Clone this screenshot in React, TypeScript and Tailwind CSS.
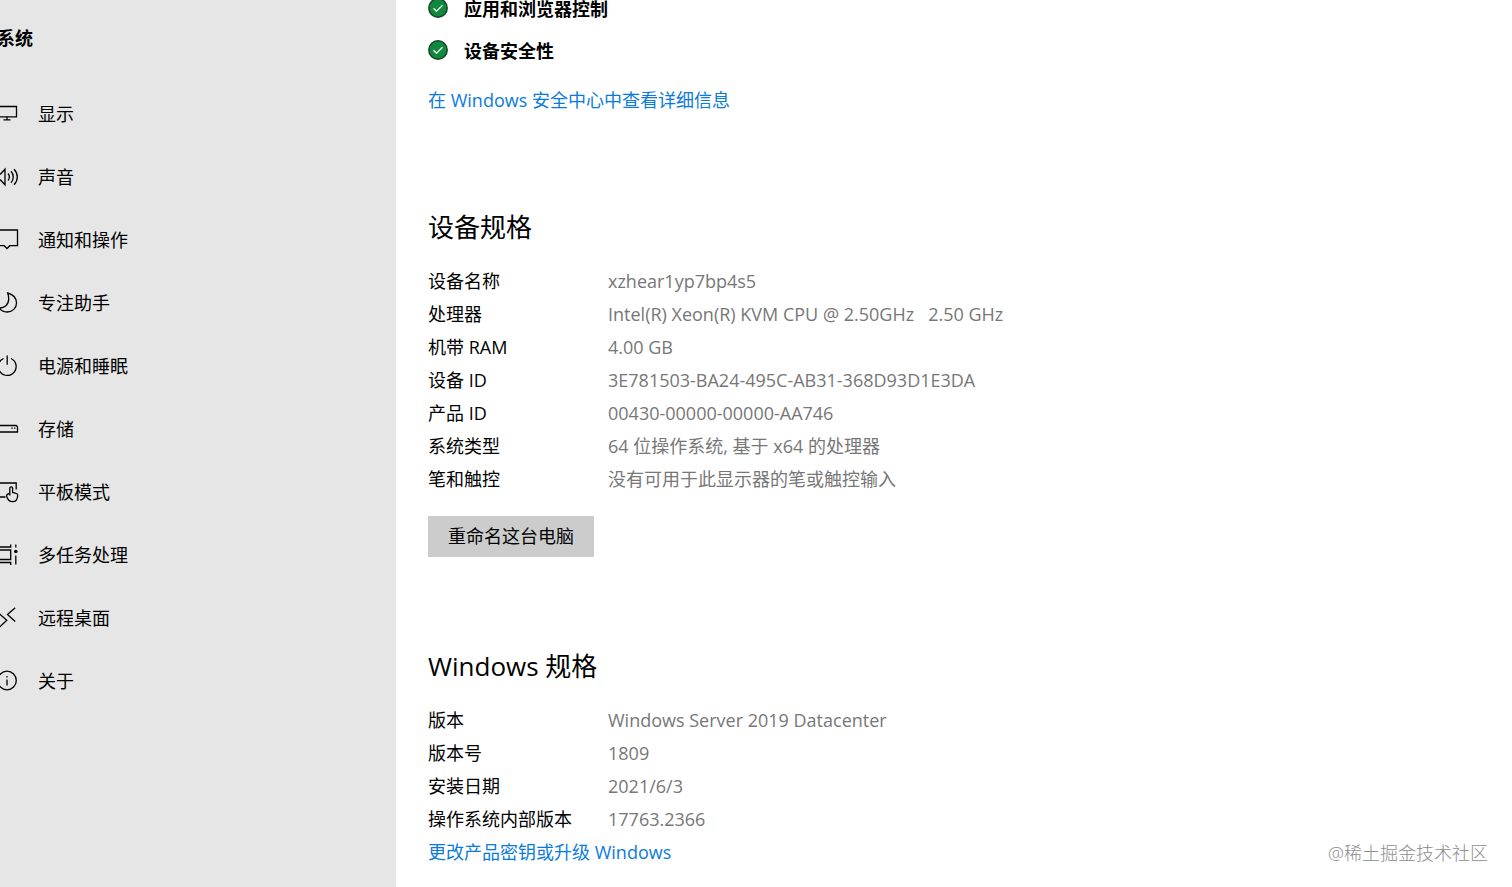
import type { ReactNode } from 'react'

type Spec = { label: string; value: string }

const navItems: { label: string; icon: ReactNode }[] = [
  {
    label: '显示',
    icon: (
      <>
        <path d="M.7 3.5h18.8v10.3H.7z" />
        <path d="M10 14v2.8M6.500 16.800h7" />
      </>
    ),
  },
  {
    label: '声音',
    icon: (
      <>
        <path d="M8 3.2v15.6L3.5 14H.7V8h2.8z" />
        <path d="M11 7.5c1.6 2 1.6 5 0 7M14 5.3c3 3.2 3 8.2 0 11.4M17 3.2c4.4 4.4 4.4 11.2 0 15.6" />
      </>
    ),
  },
  {
    label: '通知和操作',
    icon: <path d="M.7 1h19.8v15.7h-7.7L10 19.5l-2.800-2.800H.7z" />,
  },
  {
    label: '专注助手',
    icon: <path d="M10.7 1c5 1.4 8.8 5 8.8 9.9 0 5.200-4 9.100-9.300 9.100-3.600 0-6.300-1.300-8.200-4 5.500.3 9.700-3.500 9.700-9 0-2.200-.3-4-1-6z" />,
  },
  {
    label: '电源和睡眠',
    icon: (
      <>
        <path d="M6.500 3.500a8.900 8.900 0 1 0 7.500 0" />
        <path d="M10.200.5v9.200" />
      </>
    ),
  },
  {
    label: '存储',
    icon: (
      <>
        <path d="M.7 7.500h18.500l1.300 1.300v5.200H.7z" />
        <path d="M14.300 10.200h1.400M17 10.200h1.400" />
      </>
    ),
  },
  {
    label: '平板模式',
    icon: (
      <>
        <path d="M8.500 16H.7V2h18.500v6.500" />
        <path d="M12.800 14.500V7.300c0-2 2.800-2 2.800 0v4.200l3.600.8c1.300.3 1.600 1 1.500 2.200-.2 3.600-1.500 6.200-5 6.200-3.200 0-5.200-2.300-6-5.200-.3-1.300.5-2.300 1.500-2.600l1.600-.5" />
      </>
    ),
  },
  {
    label: '多任务处理',
    icon: (
      <>
        <path d="M.7 6h13v9.500H.7zM.7 3h13V.5M.7 18.500h13V21" />
        <path d="M18.800.5v3M18.800 11.500v9" />
        <circle cx="18.800" cy="7.500" r="1.800" fill="currentColor" stroke="none" />
      </>
    ),
  },
  {
    label: '远程桌面',
    icon: <path d="M1 5.500l8.800 7.800L1 21.500M18.200.8l-7.700 6.800 7.700 6.800" />,
  },
  {
    label: '关于',
    icon: (
      <>
        <circle cx="10" cy="10.500" r="9.300" />
        <path d="M10 9.500v6M10 6v1.500" />
      </>
    ),
  },
]

const securityItems = ['应用和浏览器控制', '设备安全性']

const deviceSpecs: Spec[] = [
  { label: '设备名称', value: 'xzhear1yp7bp4s5' },
  { label: '处理器', value: 'Intel(R) Xeon(R) KVM CPU @ 2.50GHz   2.50 GHz' },
  { label: '机带 RAM', value: '4.00 GB' },
  { label: '设备 ID', value: '3E781503-BA24-495C-AB31-368D93D1E3DA' },
  { label: '产品 ID', value: '00430-00000-00000-AA746' },
  { label: '系统类型', value: '64 位操作系统, 基于 x64 的处理器' },
  { label: '笔和触控', value: '没有可用于此显示器的笔或触控输入' },
]

const windowsSpecs: Spec[] = [
  { label: '版本', value: 'Windows Server 2019 Datacenter' },
  { label: '版本号', value: '1809' },
  { label: '安装日期', value: '2021/6/3' },
  { label: '操作系统内部版本', value: '17763.2366' },
]

function SpecList({ title, specs }: { title: string; specs: Spec[] }) {
  return (
    <>
      <h2 className="mb-5 text-[26px] leading-9">{title}</h2>
      <dl>
        {specs.map((spec) => (
          <div key={spec.label} className="flex leading-[33px]">
            <dt className="w-[180px] shrink-0">{spec.label}</dt>
            <dd className="whitespace-pre-wrap text-[#777]">{spec.value}</dd>
          </div>
        ))}
      </dl>
    </>
  )
}

function CheckBadge() {
  return (
    <svg className="mb-0.5 size-5 shrink-0" viewBox="0 0 20 20" fill="none" aria-hidden="true">
      <circle cx="10" cy="10" r="9.2" fill="#10893e" stroke="#17442a" strokeWidth="1.5" />
      <path d="M5.500 10.300l3 3 6-6" stroke="#d8f0df" strokeWidth="1.500" />
    </svg>
  )
}

export default function App() {
  return (
    <div className="relative flex min-h-screen bg-white font-['Open_Sans','Noto_Sans_CJK_SC',sans-serif] text-[18px] text-black">
      {/* Sidebar */}
      <aside className="w-[396px] shrink-0 overflow-hidden bg-[#e6e6e6]">
        <div className="-ml-[3px] pt-5">
          <h1 className="leading-9 font-bold">系统</h1>
          <nav className="mt-[27px]">
            {navItems.map((item) => (
              <a key={item.label} href="#" className="flex h-[63px] items-center gap-[19px]">
                <svg
                  className="mb-0.5 size-[22px] shrink-0"
                  viewBox="0 0 22 22"
                  fill="none"
                  stroke="currentColor"
                  strokeWidth="1.3"
                  aria-hidden="true"
                >
                  {item.icon}
                </svg>
                {item.label}
              </a>
            ))}
          </nav>
        </div>
      </aside>

      {/* About page */}
      <main className="min-w-0 flex-1 overflow-hidden pb-4 pl-8">
        <ul className="-mt-3">
          {securityItems.map((item) => (
            <li key={item} className="flex h-[42px] items-center gap-4 font-bold">
              <CheckBadge />
              {item}
            </li>
          ))}
        </ul>
        <a href="#" className="mt-[10px] block leading-9 text-[#0a7bdc]">
          在 Windows 安全中心中查看详细信息
        </a>

        <section className="mt-[91px]">
          <SpecList title="设备规格" specs={deviceSpecs} />
          <button type="button" className="mt-5 h-[41px] bg-[#ccc] px-5">
            重命名这台电脑
          </button>
        </section>

        <section className="mt-[91px]">
          <SpecList title="Windows 规格" specs={windowsSpecs} />
          <a href="#" className="block leading-[33px] text-[#0a7bdc]">
            更改产品密钥或升级 Windows
          </a>
        </section>
      </main>

      <p className="absolute right-6 bottom-4 leading-9 font-light text-[#8c8c8c]">@稀土掘金技术社区</p>
    </div>
  )
}
